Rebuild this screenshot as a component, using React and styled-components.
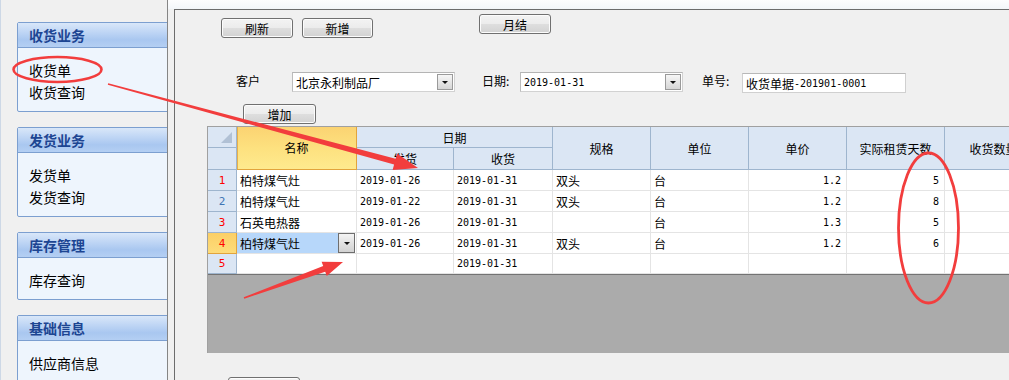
import React from "react";
import styled, { createGlobalStyle } from "styled-components";

const CJK = `"Noto Sans CJK SC", "Noto Sans", sans-serif`;
const MONO = `"DejaVu Sans Mono", "Liberation Mono", monospace`;

const Global = createGlobalStyle`
  html, body { margin: 0; padding: 0; }
  body {
    width: 1009px; height: 380px; overflow: hidden;
    background: #f0f0f0;
    font-family: ${CJK};
    font-size: 12px;
    color: #000;
  }
  * { box-sizing: border-box; }
`;

const Page = styled.div`
  position: relative;
  display: flex;
  width: 1009px;
  height: 380px;
  overflow: hidden;
  background: #f0f0f0;
`;

/* ---------- sidebar ---------- */
const Sidebar = styled.aside`
  width: 168px;
  flex: none;
  padding: 22px 0 0 17px;
  display: flex;
  flex-direction: column;
  gap: 15px;
  overflow: hidden;
  border-right: 1px solid #858585;
  box-shadow: inset 1px 0 0 #cdd8e6;
`;

const Panel = styled.section`
  width: 160px;
  flex: none;
  border: 1px solid #7c9fd0;
  border-radius: 2px;
  background: #eef5fd;
`;

const PanelHead = styled.div`
  height: 25px;
  border-bottom: 1px solid #7c9fd0;
  background: linear-gradient(#d9e7f9 0%, #c1d7f5 35%, #a9c7f0 70%, #b4cff3 100%);
  color: #1d4592;
  font-weight: bold;
  font-size: 14px;
  line-height: 24px;
  padding-left: 11px;
`;

const PanelBody = styled.ul`
  list-style: none;
  margin: 0;
  padding: 11px 0 8px 11px;
`;

const PanelItem = styled.li`
  font-size: 14px;
  line-height: 22px;
  height: 22px;
  color: #000;
`;

/* ---------- main ---------- */
const Main = styled.main`
  flex: 1;
  min-width: 0;
  display: flex;
  flex-direction: column;
  padding-left: 6px;
`;

const TopStrip = styled.div`
  height: 9px;
  flex: none;
  margin-left: -6px;
  background: linear-gradient(#fdfdfe, #f3f6f9);
`;

const Frame = styled.div`
  flex: 1;
  min-height: 0;
  border-left: 1px solid #6c6c6c;
  border-top: 1px solid #6c6c6c;
  background: #f0f0f0;
  overflow: hidden;
  display: flex;
  flex-direction: column;
`;

const Toolbar = styled.div`
  display: flex;
  align-items: flex-start;
  padding: 4px 0 0 46px;
  flex: none;
`;

const ToolGroup = styled.div`
  display: flex;
  gap: 9px;
  margin-top: 4px;
`;

const Btn = styled.button`
  width: ${p => p.$w || 72}px;
  height: 20px;
  flex: none;
  margin-left: ${p => p.$ml || 0}px;
  border: 1px solid #707070;
  border-radius: 3px;
  background: linear-gradient(#f3f3f3 0%, #ececec 48%, #dedede 52%, #d2d2d2 100%);
  box-shadow: inset 0 0 0 1px #fcfcfc;
  font-family: ${CJK};
  font-size: 12px;
  line-height: 17px;
  color: #000;
  padding: 0;
`;

const FormRow = styled.div`
  display: flex;
  align-items: flex-start;
  height: 21px;
  margin-top: 34px;
  padding-left: 61px;
  flex: none;
`;

const FieldLabel = styled.label`
  width: ${p => p.$w}px;
  margin-left: ${p => p.$ml || 0}px;
  flex: none;
  font-size: 12px;
  line-height: 18px;
  color: #000;
`;

const Combo = styled.div`
  width: 163px;
  height: 20px;
  flex: none;
  display: flex;
  align-items: stretch;
  background: #fff;
  border: 1px solid #d2d2d2;
  border-top-color: #b4b4b4;
  border-left-color: #bcbcbc;
`;

const ComboText = styled.div`
  flex: 1;
  display: flex;
  align-items: center;
  padding-left: 3px;
  font-size: 12px;
  white-space: nowrap;
`;

const ComboBtn = styled.div`
  width: 16px;
  margin: 1px 1px 1px 0;
  border: 1px solid #9a9a9a;
  background: linear-gradient(#f6f6f6, #e6e6e6 50%, #d6d6d6);
  display: flex;
  align-items: center;
  justify-content: center;
`;

const DownTri = styled.span`
  width: 0;
  height: 0;
  border-left: 3px solid transparent;
  border-right: 3px solid transparent;
  border-top: 3px solid #111;
`;

const TextBox = styled.div`
  width: 164px;
  height: 20px;
  margin-top: 1px;
  flex: none;
  display: flex;
  align-items: center;
  padding-left: 3px;
  background: #fff;
  border: 1px solid #d0d0d0;
  border-top-color: #b8b8b8;
  font-size: 12px;
  white-space: nowrap;
`;

const Num = styled.span`
  font-family: ${MONO};
  font-size: 10px;
`;

const AddRow = styled.div`
  margin-top: 11px;
  padding-left: 68px;
  flex: none;
  display: flex;
`;

/* ---------- grid ---------- */
const GridWrap = styled.div`
  margin: 2px 0 0 32px;
  flex: none;
  border-left: 1px solid #a0a0a0;
`;

const GridTable = styled.div`
  display: grid;
  grid-template-columns: 29px 120px 97px 99px 98px 98px 98px 98px 98px;
  grid-template-rows: 21px 22px 21px 21px 21px 21px 20px;
  width: max-content;
  border-top: 1px solid #a0a0a0;
`;

const HeadCell = styled.div`
  grid-row: span ${p => p.$rs || 1};
  grid-column: span ${p => p.$cs || 1};
  display: flex;
  align-items: center;
  justify-content: center;
  background: #dbe6f4;
  border-right: 1px solid #9eb5ce;
  border-bottom: 1px solid #9eb5ce;
  font-size: 12px;
  white-space: nowrap;
  overflow: hidden;
`;

const NameHead = styled(HeadCell)`
  background: linear-gradient(#fbd372 0%, #fde17f 50%, #feea8e 100%);
  border-right-color: #e2a43c;
  border-bottom-color: #e2a43c;
  box-shadow: inset 1px 0 0 #e8b04a;
  padding-bottom: 2px;
`;

const CornerCell = styled(HeadCell)`
  justify-content: flex-end;
  align-items: flex-end;
  padding: 0 4px 4px 0;
`;

const CornerTri = styled.span`
  width: 0;
  height: 0;
  border-left: 11px solid transparent;
  border-bottom: 11px solid #b1c1d5;
`;

const RowHead = styled.div`
  display: flex;
  align-items: center;
  justify-content: center;
  background: ${p => (p.$active ? "linear-gradient(#fbcf66, #fddc7a)" : "#dbe6f4")};
  border-right: 1px solid ${p => (p.$active ? "#e2a43c" : "#9eb5ce")};
  border-bottom: 1px solid ${p => (p.$active ? "#e2a43c" : "#9eb5ce")};
  color: ${p => (p.$blue ? "#4174b4" : "#ff0000")};
  font-family: ${MONO};
  font-size: 11px;
`;

const Cell = styled.div`
  display: flex;
  align-items: center;
  justify-content: ${p => (p.$right ? "flex-end" : "flex-start")};
  padding: ${p => (p.$right ? "0 5px 0 0" : "0 0 0 3px")};
  background: #fff;
  border-right: 1px solid #e4e4e4;
  border-bottom: 1px solid #e4e4e4;
  font-size: 12px;
  white-space: nowrap;
  overflow: hidden;
`;

const EditCell = styled(Cell)`
  padding: 0 1px 0 0;
  align-items: stretch;
`;

const EditText = styled.div`
  flex: 1;
  display: flex;
  align-items: center;
  padding-left: 3px;
  background: #b7d7fa;
`;

const CellDrop = styled.div`
  width: 17px;
  border: 1px solid #6e6e6e;
  background: linear-gradient(#f4f4f4, #e2e2e2 50%, #d2d2d2);
  display: flex;
  align-items: center;
  justify-content: center;
`;

const GridEmpty = styled.div`
  height: 79px;
  background: #ababab;
  border-top: 1px solid #737373;
`;

const BottomRow = styled.div`
  margin-top: 24px;
  padding-left: 53px;
  display: flex;
  flex: none;
`;

/* ---------- annotations ---------- */
const Overlay = styled.svg`
  position: absolute;
  left: 0;
  top: 0;
  pointer-events: none;
  z-index: 5;
`;

function arrowPoints(x1, y1, x2, y2, w0, w1, hl, hw) {
  const dx = x2 - x1;
  const dy = y2 - y1;
  const L = Math.hypot(dx, dy);
  const ux = dx / L;
  const uy = dy / L;
  const nx = -uy;
  const ny = ux;
  const bx = x2 - ux * hl;
  const by = y2 - uy * hl;
  const pts = [
    [x1 + (nx * w0) / 2, y1 + (ny * w0) / 2],
    [bx + (nx * w1) / 2, by + (ny * w1) / 2],
    [bx + (nx * hw) / 2, by + (ny * hw) / 2],
    [x2, y2],
    [bx - (nx * hw) / 2, by - (ny * hw) / 2],
    [bx - (nx * w1) / 2, by - (ny * w1) / 2],
    [x1 - (nx * w0) / 2, y1 - (ny * w0) / 2],
  ];
  return pts.map(p => p.map(v => v.toFixed(1)).join(",")).join(" ");
}

const RED = "#f23d3d";

function Annotations() {
  return (
    <Overlay width="1009" height="380" viewBox="0 0 1009 380">
      <ellipse cx="57.5" cy="69.5" rx="44" ry="12.5" fill="none" stroke={RED} strokeWidth="2.6" />
      <ellipse cx="928.5" cy="228" rx="30" ry="75" fill="none" stroke={RED} strokeWidth="2.8" />
      <polygon points={arrowPoints(108, 84, 418, 168, 1.5, 6, 24, 17)} fill={RED} />
      <polygon points={arrowPoints(244, 298, 343, 262, 1.5, 6, 20, 15)} fill={RED} />
    </Overlay>
  );
}

/* ---------- data ---------- */
const MENU = [
  { title: "收货业务", items: ["收货单", "收货查询"] },
  { title: "发货业务", items: ["发货单", "发货查询"] },
  { title: "库存管理", items: ["库存查询"] },
  { title: "基础信息", items: ["供应商信息"] },
];

const ROWS = [
  { name: "柏特煤气灶", send: "2019-01-26", recv: "2019-01-31", spec: "双头", unit: "台", price: "1.2", days: "5" },
  { name: "柏特煤气灶", send: "2019-01-22", recv: "2019-01-31", spec: "双头", unit: "台", price: "1.2", days: "8", blue: true },
  { name: "石英电热器", send: "2019-01-26", recv: "2019-01-31", spec: "", unit: "台", price: "1.3", days: "5" },
  { name: "柏特煤气灶", send: "2019-01-26", recv: "2019-01-31", spec: "双头", unit: "台", price: "1.2", days: "6", active: true },
  { name: "", send: "", recv: "2019-01-31", spec: "", unit: "", price: "", days: "" },
];

export default function App() {
  return (
    <>
      <Global />
      <Page>
        <Sidebar>
          {MENU.map(g => (
            <Panel key={g.title}>
              <PanelHead>{g.title}</PanelHead>
              <PanelBody>
                {g.items.map(it => (
                  <PanelItem key={it}>{it}</PanelItem>
                ))}
              </PanelBody>
            </Panel>
          ))}
        </Sidebar>

        <Main>
          <TopStrip />
          <Frame>
            <Toolbar>
              <ToolGroup>
                <Btn>刷新</Btn>
                <Btn $w={71}>新增</Btn>
              </ToolGroup>
              <Btn $ml={106}>月结</Btn>
            </Toolbar>

            <FormRow>
              <FieldLabel $w={56}>客户</FieldLabel>
              <Combo>
                <ComboText>北京永利制品厂</ComboText>
                <ComboBtn><DownTri /></ComboBtn>
              </Combo>
              <FieldLabel $w={38} $ml={27}>日期:</FieldLabel>
              <Combo>
                <ComboText><Num>2019-01-31</Num></ComboText>
                <ComboBtn><DownTri /></ComboBtn>
              </Combo>
              <FieldLabel $w={40} $ml={19}>单号:</FieldLabel>
              <TextBox>收货单据<Num>-201901-0001</Num></TextBox>
            </FormRow>

            <AddRow>
              <Btn $w={73}>增加</Btn>
            </AddRow>

            <GridWrap>
              <GridTable>
                <CornerCell><CornerTri /></CornerCell>
                <NameHead $rs={2}>名称</NameHead>
                <HeadCell $cs={2}>日期</HeadCell>
                <HeadCell $rs={2}>规格</HeadCell>
                <HeadCell $rs={2}>单位</HeadCell>
                <HeadCell $rs={2}>单价</HeadCell>
                <HeadCell $rs={2}>实际租赁天数</HeadCell>
                <HeadCell $rs={2}>收货数量</HeadCell>
                <HeadCell />
                <HeadCell>发货</HeadCell>
                <HeadCell>收货</HeadCell>

                {ROWS.map((r, i) => (
                  <React.Fragment key={i}>
                    <RowHead $active={r.active} $blue={r.blue}>{i + 1}</RowHead>
                    {r.active ? (
                      <EditCell>
                        <EditText>{r.name}</EditText>
                        <CellDrop><DownTri /></CellDrop>
                      </EditCell>
                    ) : (
                      <Cell>{r.name}</Cell>
                    )}
                    <Cell><Num>{r.send}</Num></Cell>
                    <Cell><Num>{r.recv}</Num></Cell>
                    <Cell>{r.spec}</Cell>
                    <Cell>{r.unit}</Cell>
                    <Cell $right><Num>{r.price}</Num></Cell>
                    <Cell $right><Num>{r.days}</Num></Cell>
                    <Cell />
                  </React.Fragment>
                ))}
              </GridTable>
              <GridEmpty />
            </GridWrap>

            <BottomRow>
              <Btn aria-label="保存" />
            </BottomRow>
          </Frame>
        </Main>

        <Annotations />
      </Page>
    </>
  );
}
